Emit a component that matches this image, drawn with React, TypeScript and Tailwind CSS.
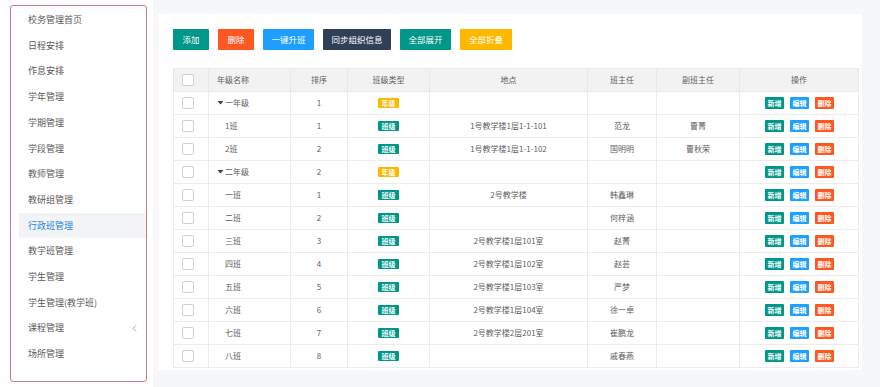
import React from "react";

const menu = [
  "校务管理首页",
  "日程安排",
  "作息安排",
  "学年管理",
  "学期管理",
  "学段管理",
  "教师管理",
  "教研组管理",
  "行政班管理",
  "教学班管理",
  "学生管理",
  "学生管理(教学班)",
  "课程管理",
  "场所管理",
];

type Row = {
  name: string;
  grade?: boolean;
  order: string;
  place: string;
  head: string;
  vice: string;
};

const rows: Row[] = [
  { name: "一年级", grade: true, order: "1", place: "", head: "", vice: "" },
  { name: "1班", order: "1", place: "1号教学楼1层1-1-101", head: "范龙", vice: "曹菁" },
  { name: "2班", order: "2", place: "1号教学楼1层1-1-102", head: "国明明", vice: "曹秋荣" },
  { name: "二年级", grade: true, order: "2", place: "", head: "", vice: "" },
  { name: "一班", order: "1", place: "2号教学楼", head: "韩鑫琳", vice: "" },
  { name: "二班", order: "2", place: "", head: "何梓涵", vice: "" },
  { name: "三班", order: "3", place: "2号教学楼1层101室", head: "赵菁", vice: "" },
  { name: "四班", order: "4", place: "2号教学楼1层102室", head: "赵芸", vice: "" },
  { name: "五班", order: "5", place: "2号教学楼1层103室", head: "严梦", vice: "" },
  { name: "六班", order: "6", place: "2号教学楼1层104室", head: "徐一卓", vice: "" },
  { name: "七班", order: "7", place: "2号教学楼2层201室", head: "崔鹏龙", vice: "" },
  { name: "八班", order: "8", place: "", head: "戚春燕", vice: "" },
];

const font = { fontFamily: '"Noto Sans CJK SC", "Noto Sans", sans-serif' };

function Checkbox() {
  return <div className="w-[12px] h-[12px] border border-[#d2d2d2] rounded-[2px] bg-white ml-[8px]" />;
}

export default function App() {
  return (
    <div className="w-[880px] h-[387px] bg-[#f6f7f9] flex overflow-hidden" style={font}>
      {/* Sidebar */}
      <div className="w-[153px] h-full bg-white pl-[10px] pt-[5px] pr-[6px] pb-[5px]">
        <div className="h-[377px] border-[1.5px] border-[#d57782] rounded-[3px] flex flex-col pt-[1px] pl-[8px]">
          {menu.map((m, i) => {
            const active = m === "行政班管理";
            return (
              <div
                key={i}
                className={
                  "h-[25.7px] flex items-center justify-between pl-[9px] pr-[8px] text-[9px] " +
                  (active ? "bg-[#f3f4f6] text-[#2b86d9]" : "text-[#5a5a5a]")
                }
              >
                <span>{m}</span>
                {m === "课程管理" && (
                  <svg width="5" height="7" viewBox="0 0 5 7" className="mr-[1px]">
                    <path d="M4 0.5 L1 3.5 L4 6.5" fill="none" stroke="#9a9a9a" strokeWidth="0.9" />
                  </svg>
                )}
              </div>
            );
          })}
        </div>
      </div>

      {/* Main card */}
      <div className="ml-[5px] mt-[14px] w-[704px] h-[356px] bg-white pl-[15px] pr-[4px] pt-[15px]">
        <div className="flex gap-[9px] h-[21px]">
          <button className="w-[36px] h-[21px] bg-[#009688] text-white text-[8.5px] rounded-[1px]">添加</button>
          <button className="w-[36px] h-[21px] bg-[#ff5722] text-white text-[8.5px] rounded-[1px]">删除</button>
          <button className="w-[51px] h-[21px] bg-[#1e9fff] text-white text-[8.5px] rounded-[1px]">一键升班</button>
          <button className="w-[68px] h-[21px] bg-[#2f4056] text-white text-[8.5px] rounded-[1px]">同步组织信息</button>
          <button className="w-[51px] h-[21px] bg-[#009688] text-white text-[8.5px] rounded-[1px]">全部展开</button>
          <button className="w-[52px] h-[21px] bg-[#ffb800] text-white text-[8.5px] rounded-[1px]">全部折叠</button>
        </div>

        <table className="mt-[18px] w-[685px] table-fixed border-collapse text-[8px] text-[#5e5e5e]">
          <colgroup>
            <col className="w-[35px]" />
            <col className="w-[82px]" />
            <col className="w-[57px]" />
            <col className="w-[82px]" />
            <col className="w-[158px]" />
            <col className="w-[69px]" />
            <col className="w-[83px]" />
            <col className="w-[119px]" />
          </colgroup>
          <thead>
            <tr className="h-[23px] bg-[#f2f2f2]">
              <th className="border border-[#e8e8e8] p-0 font-normal">
                <Checkbox />
              </th>
              <th className="border border-[#e8e8e8] font-normal text-left pl-[8px]">年级名称</th>
              <th className="border border-[#e8e8e8] font-normal">排序</th>
              <th className="border border-[#e8e8e8] font-normal">班级类型</th>
              <th className="border border-[#e8e8e8] font-normal">地点</th>
              <th className="border border-[#e8e8e8] font-normal">班主任</th>
              <th className="border border-[#e8e8e8] font-normal">副班主任</th>
              <th className="border border-[#e8e8e8] font-normal">操作</th>
            </tr>
          </thead>
          <tbody>
            {rows.map((r, i) => (
              <tr key={i} className="h-[23px]">
                <td className="border border-[#ececec] p-0">
                  <Checkbox />
                </td>
                <td className="border border-[#ececec] pl-[8px]">
                  <div className="flex items-center">
                    {r.grade ? (
                      <svg width="8" height="4" viewBox="0 0 8 4">
                        <path d="M0.5 0 L6.5 0 L3.5 3.5 Z" fill="#444" />
                      </svg>
                    ) : (
                      <span className="w-[8px]" />
                    )}
                    <span>{r.name}</span>
                  </div>
                </td>
                <td className="border border-[#ececec] text-center">{r.order}</td>
                <td className="border border-[#ececec]">
                  <div className="flex justify-center">
                    <span
                      className={
                        "w-[21px] h-[10px] flex items-center justify-center text-white text-[7px] font-semibold rounded-[1px] " +
                        (r.grade ? "bg-[#ffb800]" : "bg-[#009688]")
                      }
                    >
                      {r.grade ? "年级" : "班级"}
                    </span>
                  </div>
                </td>
                <td className="border border-[#ececec] text-center">{r.place}</td>
                <td className="border border-[#ececec] text-center">{r.head}</td>
                <td className="border border-[#ececec] text-center">{r.vice}</td>
                <td className="border border-[#ececec]">
                  <div className="flex justify-center gap-[6px] pl-[1px]">
                    <span className="w-[19px] h-[12px] bg-[#009688] text-white text-[7px] font-semibold flex items-center justify-center rounded-[1px]">新增</span>
                    <span className="w-[19px] h-[12px] bg-[#1e9fff] text-white text-[7px] font-semibold flex items-center justify-center rounded-[1px]">编辑</span>
                    <span className="w-[19px] h-[12px] bg-[#ff5722] text-white text-[7px] font-semibold flex items-center justify-center rounded-[1px]">删除</span>
                  </div>
                </td>
              </tr>
            ))}
          </tbody>
        </table>
      </div>
    </div>
  );
}
